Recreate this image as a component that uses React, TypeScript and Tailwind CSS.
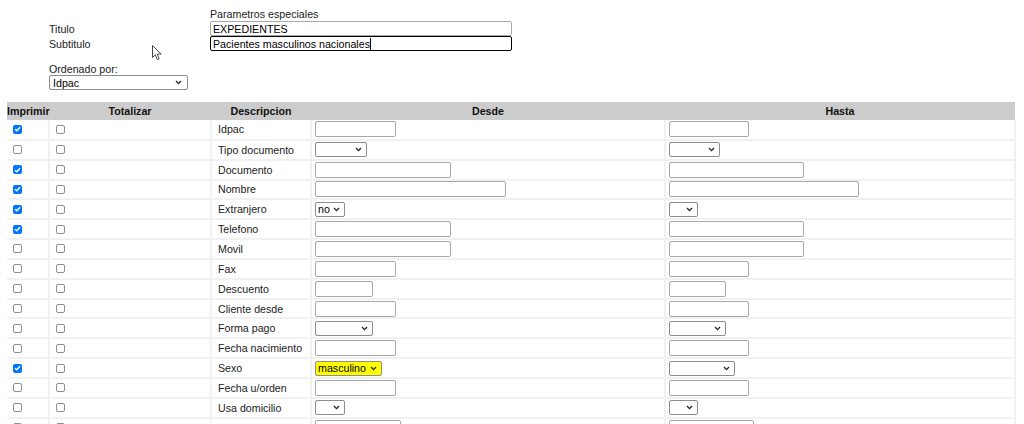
import React from "react";

type Field = {
  label: string;
  print: boolean;
  kind: "input" | "select";
  w: number;
  value?: string;
  yellow?: boolean;
};

const fields: Field[] = [
  { label: "Idpac", print: true, kind: "input", w: 81 },
  { label: "Tipo documento", print: false, kind: "select", w: 52 },
  { label: "Documento", print: true, kind: "input", w: 136 },
  { label: "Nombre", print: true, kind: "input", w: 191 },
  { label: "Extranjero", print: true, kind: "select", w: 30, value: "no" },
  { label: "Telefono", print: true, kind: "input", w: 136 },
  { label: "Movil", print: false, kind: "input", w: 136 },
  { label: "Fax", print: false, kind: "input", w: 81 },
  { label: "Descuento", print: false, kind: "input", w: 58 },
  { label: "Cliente desde", print: false, kind: "input", w: 81 },
  { label: "Forma pago", print: false, kind: "select", w: 58 },
  { label: "Fecha nacimiento", print: false, kind: "input", w: 81 },
  { label: "Sexo", print: true, kind: "select", w: 67, value: "masculino", yellow: true },
  { label: "Fecha u/orden", print: false, kind: "input", w: 81 },
  { label: "Usa domicilio", print: false, kind: "select", w: 30 },
  // fila cortada por el borde inferior: no se ve su texto
  { label: "", print: false, kind: "input", w: 86 },
];

function Chevron() {
  return (
    <svg width="7" height="5" viewBox="0 0 7 5" className="shrink-0">
      <path d="M1 1 L3.5 3.6 L6 1" fill="none" stroke="#222" strokeWidth="1.3" />
    </svg>
  );
}

function Check({ on }: { on: boolean }) {
  if (on) {
    return (
      <span className="flex w-[9px] h-[9px] rounded-[2px] bg-[#0075ff] items-center justify-center">
        <svg width="7" height="6" viewBox="0 0 7 6">
          <path d="M1 3.2 L2.8 4.8 L6 1.2" fill="none" stroke="#fff" strokeWidth="1.4" />
        </svg>
      </span>
    );
  }
  return <span className="block w-[9px] h-[9px] rounded-[2px] border border-[#8f8f8f] bg-white" />;
}

function Select({ w, value, yellow }: { w: number; value?: string; yellow?: boolean }) {
  return (
    <div
      className={`flex items-center justify-between h-[15px] border border-[#8d8d8d] rounded-[2px] pl-[2px] pr-[4px] ${
        yellow ? "bg-[#ffff00]" : "bg-white"
      }`}
      style={{ width: w }}
    >
      <span className="text-black leading-[12px]">{value ?? ""}</span>
      <Chevron />
    </div>
  );
}

function Input({ w }: { w: number }) {
  return <div className="h-[16px] border border-[#a8a8a8] rounded-[2px] bg-white" style={{ width: w }} />;
}

function Control({ f }: { f: Field }) {
  return f.kind === "input" ? <Input w={f.w} /> : <Select w={f.w} value={f.value} yellow={f.yellow} />;
}

export default function App() {
  return (
    <div className="relative w-[1024px] h-[424px] overflow-hidden bg-white text-[#222] text-[10.67px] leading-[12px] font-['Liberation_Sans',Arial,sans-serif]">
      {/* Encabezado del informe */}
      <div className="pl-[49px] pt-[8px]">
        <div className="grid grid-cols-[161px_302px]">
          <div />
          <div className="h-[13px]">Parametros especiales</div>
          <div className="flex items-center h-[15px]">Titulo</div>
          <div className="h-[15px] border border-[#a8a8a8] rounded-[2px] flex items-center pl-[2px] text-black">
            EXPEDIENTES
          </div>
          <div className="flex items-center h-[15px]">Subtitulo</div>
          <div className="h-[15px] border border-black rounded-[2px] flex items-center pl-[2px] text-black">
            Pacientes masculinos nacionales
            <span className="inline-block w-px h-[12px] bg-black" />
          </div>
        </div>
        <div className="mt-[12px] h-[12px]">Ordenado por:</div>
        <div className="w-[139px] h-[15px] border border-[#8d8d8d] rounded-[2px] flex items-center justify-between pl-[3px] pr-[5px] text-black">
          <span>Idpac</span>
          <Chevron />
        </div>
      </div>

      {/* Puntero del raton */}
      <svg className="absolute left-[152px] top-[45px]" width="11" height="16" viewBox="0 0 11 16">
        <path
          d="M0.5 0.5 L0.5 12.5 L3.3 9.8 L5.3 14.6 L7.2 13.8 L5.2 9.1 L9.2 9.1 Z"
          fill="#fff"
          stroke="#333"
          strokeWidth="0.9"
          strokeLinejoin="round"
        />
      </svg>

      {/* Tabla de campos */}
      <table className="ml-[7px] mt-[12px] w-[1008px] border-collapse table-fixed">
        <colgroup>
          <col className="w-[42px]" />
          <col className="w-[162px]" />
          <col className="w-[100px]" />
          <col className="w-[354px]" />
          <col className="w-[350px]" />
        </colgroup>
        <thead>
          <tr className="h-[18px] bg-[#cccccc] font-bold text-[#111]">
            <th className="text-left font-bold p-0">Imprimir</th>
            <th className="font-bold p-0">Totalizar</th>
            <th className="font-bold p-0">Descripcion</th>
            <th className="font-bold p-0">Desde</th>
            <th className="font-bold p-0">Hasta</th>
          </tr>
        </thead>
        <tbody>
          {fields.map((f, i) => (
            <tr key={i} className="h-[19.85px]">
              <td className="p-0 pl-[6px] border-r-2 border-b-2 border-[#f1f1f1]">
                <Check on={f.print} />
              </td>
              <td className="p-0 pl-[6px] border-r-2 border-b-2 border-[#f1f1f1]">
                <Check on={false} />
              </td>
              <td className="p-0 pl-[6px] border-r-2 border-b-2 border-[#f1f1f1] whitespace-nowrap">{f.label}</td>
              <td className="p-0 pl-[3px] border-r-2 border-b-2 border-[#f1f1f1]">
                <Control f={f} />
              </td>
              <td className="p-0 pl-[3px] border-r-2 border-b-2 border-[#f1f1f1]">
                <Control f={f.kind === "select" ? { ...f, value: undefined, yellow: false, w: f.w - 1 } : { ...f, w: f.w - 1 }} />
              </td>
            </tr>
          ))}
        </tbody>
      </table>
    </div>
  );
}
